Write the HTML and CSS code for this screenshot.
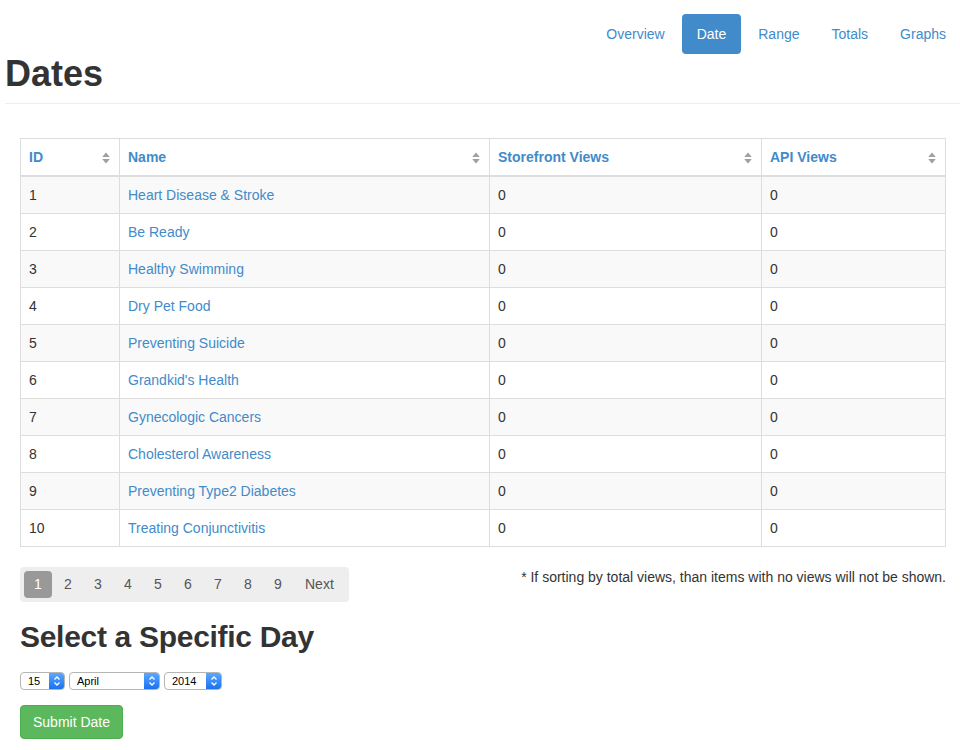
FILE: index.html
```html
<!DOCTYPE html>
<html>
<head>
<meta charset="utf-8">
<title>Dates</title>
<link rel="stylesheet" href="styles.css">
</head>
<body>
<div class="top">
  <ul class="nav-pills">
    <li><a href="#">Overview</a></li>
    <li class="active"><a href="#">Date</a></li>
    <li><a href="#">Range</a></li>
    <li><a href="#">Totals</a></li>
    <li><a href="#">Graphs</a></li>
  </ul>
  <div class="page-header"><h1>Dates</h1></div>
</div>
<div class="content">
  <table class="data">
    <thead>
      <tr>
        <th class="c-id"><span>ID</span><svg class="sort" width="8" height="12" viewBox="0 0 8 12"><path d="M4 0.5 L7.8 5 L0.2 5 Z M0.2 7 L7.8 7 L4 11.5 Z" fill="#a0a0a0"/></svg></th>
        <th class="c-name"><span>Name</span><svg class="sort" width="8" height="12" viewBox="0 0 8 12"><path d="M4 0.5 L7.8 5 L0.2 5 Z M0.2 7 L7.8 7 L4 11.5 Z" fill="#a0a0a0"/></svg></th>
        <th class="c-sf"><span>Storefront Views</span><svg class="sort" width="8" height="12" viewBox="0 0 8 12"><path d="M4 0.5 L7.8 5 L0.2 5 Z M0.2 7 L7.8 7 L4 11.5 Z" fill="#a0a0a0"/></svg></th>
        <th class="c-api"><span>API Views</span><svg class="sort" width="8" height="12" viewBox="0 0 8 12"><path d="M4 0.5 L7.8 5 L0.2 5 Z M0.2 7 L7.8 7 L4 11.5 Z" fill="#a0a0a0"/></svg></th>
      </tr>
    </thead>
    <tbody>
      <tr><td>1</td><td><a href="#">Heart Disease &amp; Stroke</a></td><td>0</td><td>0</td></tr>
      <tr><td>2</td><td><a href="#">Be Ready</a></td><td>0</td><td>0</td></tr>
      <tr><td>3</td><td><a href="#">Healthy Swimming</a></td><td>0</td><td>0</td></tr>
      <tr><td>4</td><td><a href="#">Dry Pet Food</a></td><td>0</td><td>0</td></tr>
      <tr><td>5</td><td><a href="#">Preventing Suicide</a></td><td>0</td><td>0</td></tr>
      <tr><td>6</td><td><a href="#">Grandkid's Health</a></td><td>0</td><td>0</td></tr>
      <tr><td>7</td><td><a href="#">Gynecologic Cancers</a></td><td>0</td><td>0</td></tr>
      <tr><td>8</td><td><a href="#">Cholesterol Awareness</a></td><td>0</td><td>0</td></tr>
      <tr><td>9</td><td><a href="#">Preventing Type2 Diabetes</a></td><td>0</td><td>0</td></tr>
      <tr><td>10</td><td><a href="#">Treating Conjunctivitis</a></td><td>0</td><td>0</td></tr>
    </tbody>
  </table>

  <div class="below">
    <div class="pagination">
      <span class="pg active">1</span>
      <span class="pg">2</span>
      <span class="pg">3</span>
      <span class="pg">4</span>
      <span class="pg">5</span>
      <span class="pg">6</span>
      <span class="pg">7</span>
      <span class="pg">8</span>
      <span class="pg">9</span>
      <span class="pg next">Next</span>
    </div>
    <p class="note">* If sorting by total views, than items with no views will not be shown.</p>
  </div>

  <h2>Select a Specific Day</h2>
  <div class="selects">
    <div class="sel w-day"><span class="val">15</span><span class="arrow"><svg width="8" height="12" viewBox="0 0 8 12"><path d="M1.5 4.5 L4 2 L6.5 4.5 M1.5 7.5 L4 10 L6.5 7.5" fill="none" stroke="#fff" stroke-width="1.3"/></svg></span></div>
    <div class="sel w-month"><span class="val">April</span><span class="arrow"><svg width="8" height="12" viewBox="0 0 8 12"><path d="M1.5 4.5 L4 2 L6.5 4.5 M1.5 7.5 L4 10 L6.5 7.5" fill="none" stroke="#fff" stroke-width="1.3"/></svg></span></div>
    <div class="sel w-year"><span class="val">2014</span><span class="arrow"><svg width="8" height="12" viewBox="0 0 8 12"><path d="M1.5 4.5 L4 2 L6.5 4.5 M1.5 7.5 L4 10 L6.5 7.5" fill="none" stroke="#fff" stroke-width="1.3"/></svg></span></div>
  </div>
  <button class="btn-submit" type="button">Submit Date</button>
</div>
</body>
</html>
```

FILE: styles.css
```css
* { box-sizing: border-box; }
html, body { margin: 0; padding: 0; background: #fff; }
body {
  font-family: "Liberation Sans", Arial, sans-serif;
  font-size: 14px;
  line-height: 20px;
  color: #333;
}
a { color: #428bca; text-decoration: none; }

.top { padding: 14px 0 0 5px; }
.nav-pills {
  list-style: none;
  margin: 0;
  padding: 0;
  display: flex;
  justify-content: flex-end;
  gap: 2px;
  margin-right: -1px;
}
.nav-pills a {
  display: block;
  padding: 10px 15px;
  border-radius: 4px;
  line-height: 20px;
}
.nav-pills .active a { background: #428bca; color: #fff; }

.page-header {
  padding-bottom: 9px;
  border-bottom: 1px solid #eee;
}
.page-header h1 {
  margin: 0;
  font-size: 36px;
  line-height: 40px;
  font-weight: bold;
  color: #333;
}

.content { padding: 34px 14px 0 20px; }

.data {
  width: 100%;
  border-collapse: collapse;
  border: 1px solid #ddd;
}
.data th, .data td {
  border: 1px solid #ddd;
  padding: 8px;
  line-height: 20px;
  text-align: left;
  vertical-align: top;
}
.data th {
  color: #428bca;
  font-weight: bold;
  border-bottom: 2px solid #ddd;
  position: relative;
}
.data th .sort { position: absolute; right: 9px; top: 13px; }
.c-id { width: 99px; }
.c-name { width: 370px; }
.c-sf { width: 272px; }
.data tbody tr:nth-child(odd) td { background: #f9f9f9; }

.below {
  display: flex;
  justify-content: space-between;
  align-items: flex-start;
  margin-top: 20px;
}
.pagination {
  display: flex;
  gap: 2px;
  background: #eee;
  border-radius: 4px;
  padding: 4px;
}
.pg {
  display: block;
  width: 28px;
  text-align: center;
  height: 27px;
  line-height: 27px;
  color: #555;
  border-radius: 4px;
}
.pg.active { background: #999; color: #fff; }
.pg.next { width: auto; padding: 0 11px 0 11px; }
.note { margin: 0; line-height: 20px; }

h2 {
  margin: 18px 0 0;
  font-size: 30px;
  line-height: 33px;
  font-weight: bold;
  letter-spacing: -0.3px;
  color: #333;
}

.selects {
  display: flex;
  gap: 4px;
  margin-top: 19px;
}
.sel {
  display: flex;
  height: 18px;
  border: 1px solid #b5b5b5;
  border-radius: 4px;
  background: #fff;
  overflow: hidden;
  font-size: 11px;
  line-height: 16px;
  color: #000;
}
.sel .val { flex: 1; padding-left: 7px; }
.sel .arrow {
  width: 15px;
  display: flex;
  align-items: center;
  justify-content: center;
  background: linear-gradient(#5aa8ff, #1b71f0);
}
.w-day { width: 45px; }
.w-month { width: 91px; }
.w-year { width: 58px; }

.btn-submit {
  display: block;
  margin-top: 15px;
  padding: 6px 12px;
  font-family: "Liberation Sans", Arial, sans-serif;
  font-size: 14px;
  line-height: 20px;
  color: #fff;
  background: #5cb85c;
  border: 1px solid #4cae4c;
  border-radius: 4px;
}
```
